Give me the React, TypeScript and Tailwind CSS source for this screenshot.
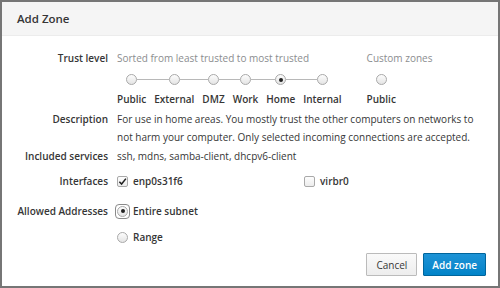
import React from "react";

const Radio = ({ checked = false, focus = false }: { checked?: boolean; focus?: boolean }) => (
  <span className={`relative inline-flex items-center justify-center w-[11px] h-[11px] shrink-0 ${focus ? "outline outline-1 outline-[#8a8a8a] outline-offset-[1px] rounded-[2px]" : ""}`}>
    <span className="w-[11px] h-[11px] rounded-full border border-[#a9a9a9] bg-gradient-to-b from-[#fdfdfd] to-[#e4e4e4] flex items-center justify-center">
      {checked && <span className="w-[4px] h-[4px] rounded-full bg-[#222]" />}
    </span>
  </span>
);

const Checkbox = ({ checked = false }: { checked?: boolean }) => (
  <span className="w-[11px] h-[11px] shrink-0 rounded-[2px] border border-[#a9a9a9] bg-gradient-to-b from-[#fdfdfd] to-[#ececec] flex items-center justify-center">
    {checked && (
      <svg width="9" height="9" viewBox="0 0 10 10">
        <path d="M1.5 5.2 L4 7.8 L8.8 1.8" fill="none" stroke="#222" strokeWidth="1.7" />
      </svg>
    )}
  </span>
);

const levels = ["Public", "External", "DMZ", "Work", "Home", "Internal"];

export default function App() {
  return (
    <div className="w-[500px] h-[288px] overflow-hidden border-2 border-[#767676] bg-white font-['Open_Sans',sans-serif] text-[10px] leading-[18px] text-[#363636] flex flex-col whitespace-nowrap">
      <div className="h-[34px] shrink-0 bg-[#f5f5f5] border-b border-[#ececec] px-[15px] flex items-center">
        <span className="text-[11.5px] font-semibold">Add Zone</span>
      </div>
      <div className="flex-1 flex flex-col pt-[13px] pl-[14px] pr-[12px]">
        <div className="grid grid-cols-[92px_1fr] gap-x-[9px]">
          <div className="text-right font-semibold">Trust level</div>
          <div className="flex">
            <div className="flex flex-col">
              <div className="text-[#8b8d8f]">Sorted from least trusted to most trusted</div>
              <div className="flex mt-[7px] -ml-[4px]">
                {levels.map((l, i) => (
                  <div key={l} className="flex flex-col items-stretch px-[4px]">
                    <div className="flex items-center h-[11px]">
                      <span className={`flex-1 h-px ${i === 0 ? "" : "bg-[#b8b8b8]"} -ml-[4px]`} />
                      <Radio checked={l === "Home"} />
                      <span className={`flex-1 h-px ${i === levels.length - 1 ? "" : "bg-[#b8b8b8]"} -mr-[4px]`} />
                    </div>
                    <div className="mt-[5px] text-center font-semibold">{l}</div>
                  </div>
                ))}
              </div>
            </div>
            <div className="flex flex-col ml-[21px]">
              <div className="text-[#8b8d8f]">Custom zones</div>
              <div className="flex mt-[7px]">
                <div className="flex flex-col items-center">
                  <div className="flex items-center h-[11px]">
                    <Radio />
                  </div>
                  <div className="mt-[5px] font-semibold">Public</div>
                </div>
              </div>
            </div>
          </div>

          <div className="text-right font-semibold mt-[2px]">Description</div>
          <div className="mt-[2px] pr-[8px] whitespace-normal">
            For use in home areas. You mostly trust the other computers on networks to not harm your computer. Only selected incoming connections are accepted.
          </div>

          <div className="text-right font-semibold mt-[1px]">Included services</div>
          <div className="mt-[1px]">ssh, mdns, samba-client, dhcpv6-client</div>

          <div className="text-right font-semibold mt-[7px]">Interfaces</div>
          <div className="mt-[7px] grid grid-cols-[187px_1fr]">
            <label className="flex items-center gap-[5px]">
              <Checkbox checked />
              <span className="font-semibold">enp0s31f6</span>
            </label>
            <label className="flex items-center gap-[5px]">
              <Checkbox />
              <span className="font-semibold">virbr0</span>
            </label>
          </div>

          <div className="text-right font-semibold mt-[12px]">Allowed Addresses</div>
          <div className="mt-[12px] flex flex-col gap-[8px]">
            <label className="flex items-center gap-[5px]">
              <Radio checked focus />
              <span className="font-semibold">Entire subnet</span>
            </label>
            <label className="flex items-center gap-[5px]">
              <Radio />
              <span className="font-semibold">Range</span>
            </label>
          </div>
        </div>
        <div className="flex justify-end gap-[6px] mt-[7px]">
          <button className="h-[23px] px-[9px] rounded-[1px] border border-[#bbbbbb] bg-gradient-to-b from-[#fafafa] to-[#ededed] text-[#363636] text-[10px]">
            Cancel
          </button>
          <button className="h-[23px] px-[8px] rounded-[1px] border border-[#00659c] bg-gradient-to-b from-[#1d93d6] to-[#0083c8] text-white text-[10px] font-semibold">
            Add zone
          </button>
        </div>
      </div>
    </div>
  );
}
